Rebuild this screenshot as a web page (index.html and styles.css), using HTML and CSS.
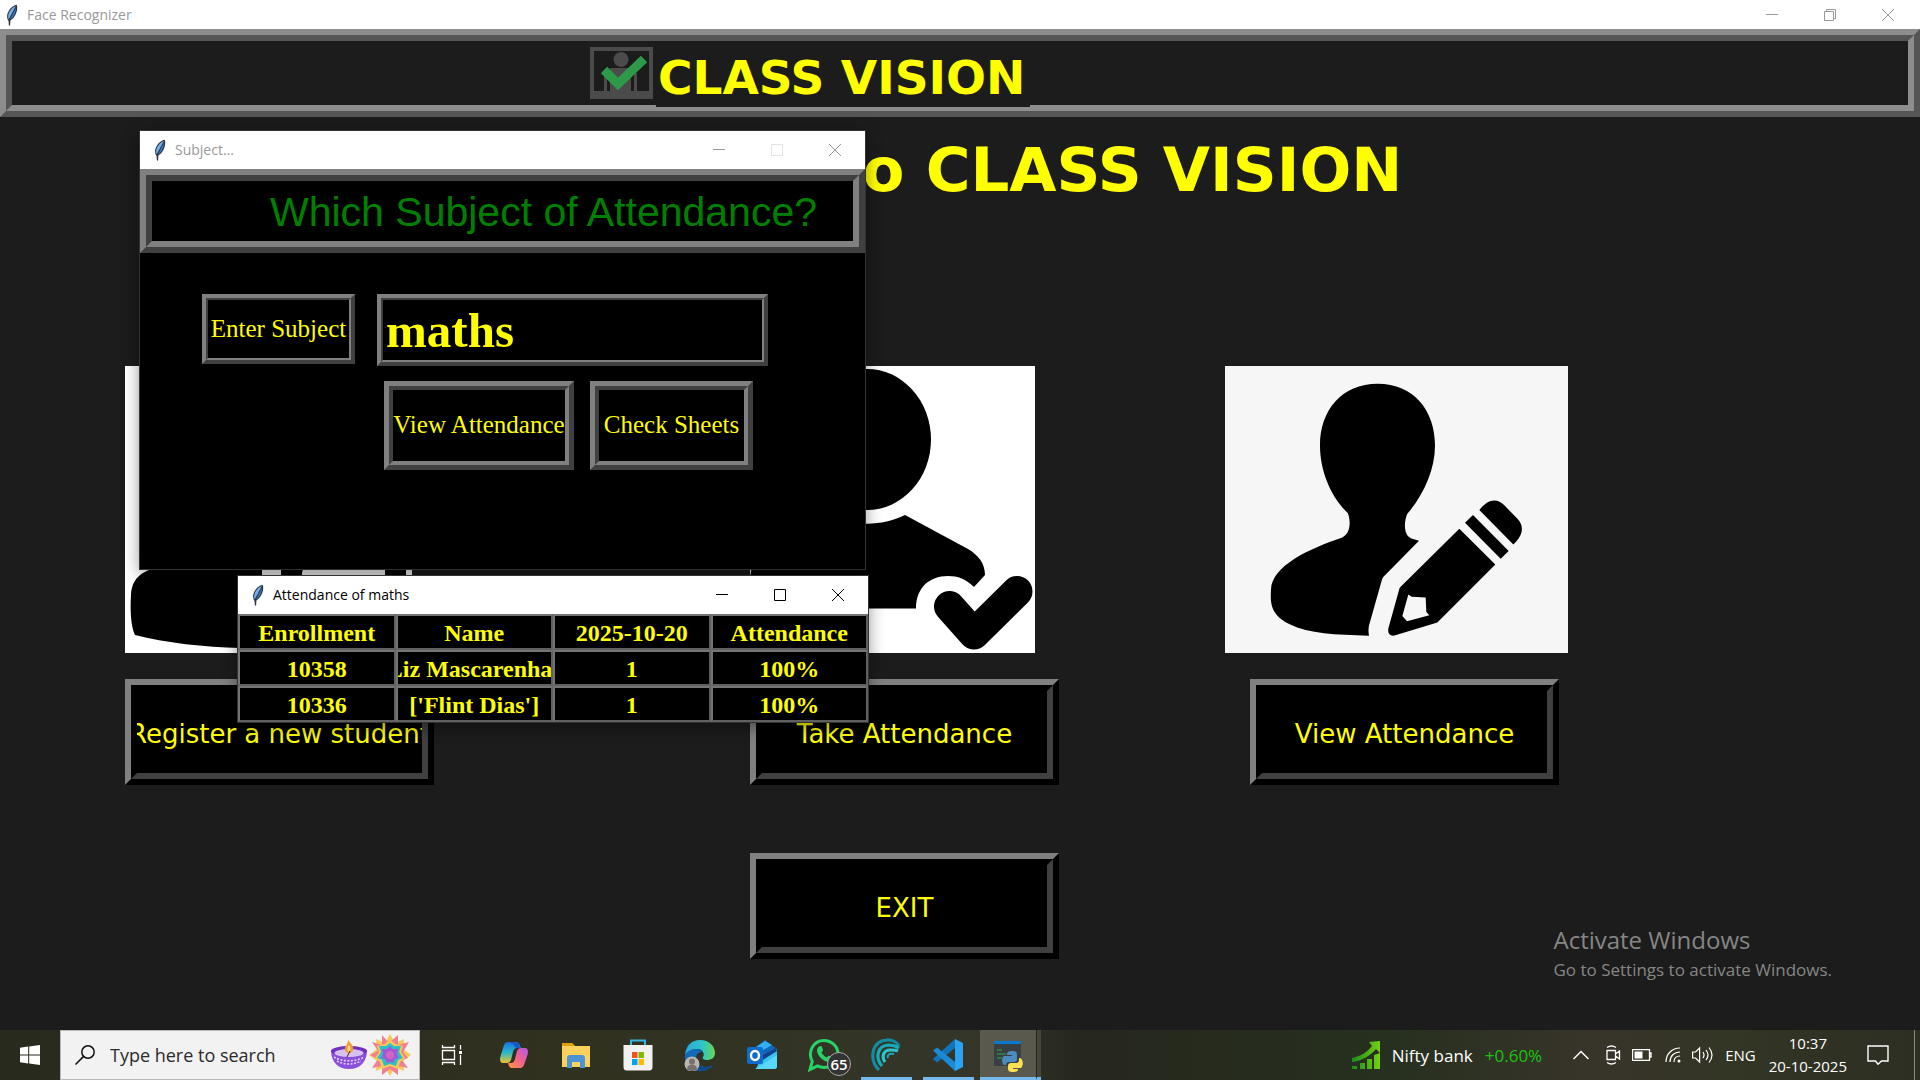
FILE: index.html
```html
<!DOCTYPE html>
<html lang="en">
<head>
<meta charset="utf-8">
<title>Face Recognizer</title>
<link rel="stylesheet" href="styles.css">
</head>
<body>
<svg class="defs" aria-hidden="true">
  <symbol id="feather" viewBox="0 0 14 22">
    <path d="M11.500 .8C7 2 3 6.500 2.200 11c-.3 2.500.2 4.500 1.300 5.800l.4 4.700h1.200l.3-5C9 14.500 12 9 12.200 4.500c.1-1.800-.1-3-.7-3.700z" fill="#2a3647"/>
    <path d="M10.800 2C7 3.500 4 7 3.200 11.500c-.2 1.600 0 2.800.5 3.800L9 5.500z" fill="#78aeea"/>
    <path d="M11.200 3.500 5 15.500c3-1.800 5.500-6 6.200-12z" fill="#3b7cc8"/>
  </symbol>
  <symbol id="minimize" viewBox="0 0 12 12"><path d="M0 5.500h12" stroke="currentColor"/></symbol>
  <symbol id="maximize" viewBox="0 0 12 12"><path d="M.5.5h11v11H.5z" fill="none" stroke="currentColor"/></symbol>
  <symbol id="restore" viewBox="0 0 12 12"><path d="M.5 2.500h9v9h-9zM2.500 2.500v-2h9v9h-2" fill="none" stroke="currentColor"/></symbol>
  <symbol id="close" viewBox="0 0 12 12"><path d="M0 0l12 12M12 0 0 12" stroke="currentColor"/></symbol>
</svg>

<main class="app">
  <header class="titlebar inactive">
    <svg class="feather"><use href="#feather"/></svg>
    <span class="caption">Face Recognizer</span>
    <button class="control" aria-label="Minimize"><svg><use href="#minimize"/></svg></button>
    <button class="control" aria-label="Restore"><svg><use href="#restore"/></svg></button>
    <button class="control" aria-label="Close"><svg><use href="#close"/></svg></button>
  </header>

  <div class="banner ridge">
    <span class="banner-logo">
      <svg viewBox="0 0 63 52" aria-hidden="true">
        <path d="M0 0h63v52H0zM4 4v40h10V26h3v18h3V21h21v23h3V26h3v18h12V4z" fill="#4b4b4b" fill-rule="evenodd"/>
        <ellipse cx="31" cy="12.500" rx="7.500" ry="7.500" fill="#4b4b4b"/>
        <path d="M14 23l14 14L54 12" fill="none" stroke="#2c9a48" stroke-width="9"/>
      </svg>
    </span>
    <span class="banner-title">CLASS VISION</span>
  </div>

  <h1 class="welcome">Welcome to CLASS VISION</h1>

  <div class="actions">
    <section class="action">
      <svg class="art art-register" viewBox="125 366 287 287" preserveAspectRatio="none" aria-hidden="true">
        <path d="M125 366h287v287H125z" fill="#fff"/>
        <ellipse cx="222" cy="452" rx="60" ry="72"/>
        <path d="M158 567c-18 5-26 12-27 28-1 16 0 32 4 40 30 8 70 12 105 13h166V540H158z"/>
        <path d="M262 540h19v50h-19zM310 540h67l8 30v15h-83v-12z" fill="#fff"/>
      </svg>
      <button class="big-button"><span>Register a new student</span></button>
    </section>
    <section class="action">
      <svg class="art art-take" viewBox="750 366 285 287" preserveAspectRatio="none" aria-hidden="true">
        <path d="M750 366h285v287H750z" fill="#fff"/>
        <ellipse cx="867" cy="439.500" rx="64" ry="70.500"/>
        <path d="M829 515c23 11 52 12 76 0l63 34c10 6 17 14 17 26l-11 12c-8-8-16-11-26-11-19 0-32 12-32 32.600H750V580c1-16 6-25 16-31z"/>
        <path d="M949.500 606.500 974 634l43-42.500" fill="none" stroke="#000" stroke-width="31" stroke-linecap="round" stroke-linejoin="round"/>
      </svg>
      <button class="big-button"><span>Take Attendance</span></button>
    </section>
    <section class="action action-view">
      <svg class="art art-view" viewBox="75 48 1029 859" preserveAspectRatio="none" aria-hidden="true">
        <path d="M75 48h1029v859H75z" fill="#f6f6f6"/>
        <path d="M533 101c108 0 172 80 172 185 0 72-34 148-83 204-12 28-10 66 12 74l23 7-102 103c-5 4-8 9-10 17l-38 134c-2 10-2 20 0 30-100-2-180-6-238-34-60-28-58-68-56-104 2-70 112-122 214-156 22-10 27-42 17-72-48-46-84-122-84-203 0-105 65-185 173-185z"/>
        <path d="M778 535 886 642 712 816 586 854c-14 4-24-4-21-20l34-122zM819 494 926 602 902 625 795 517zM838 479c26-32 52-37 75-14l38 39c22 22 20 50-11 78z"/>
        <path d="M625 732 607 796 621 812 688 794 679 784 677 741 635 739z" fill="#f6f6f6"/>
      </svg>
      <button class="big-button"><span>View Attendance</span></button>
    </section>
    <button class="big-button exit-button"><span>EXIT</span></button>
  </div>

  <p class="watermark"><strong>Activate Windows</strong><span>Go to Settings to activate Windows.</span></p>
</main>

<section class="window subject-window">
  <header class="titlebar inactive">
    <svg class="feather"><use href="#feather"/></svg>
    <span class="caption">Subject...</span>
    <button class="control" aria-label="Minimize"><svg><use href="#minimize"/></svg></button>
    <button class="control" aria-label="Maximize" disabled><svg><use href="#maximize"/></svg></button>
    <button class="control" aria-label="Close"><svg><use href="#close"/></svg></button>
  </header>
  <h2 class="question ridge">Which Subject of Attendance?</h2>
  <form class="subject-form">
    <div class="subject-row">
      <label class="subject-label ridge thin" for="subject">Enter Subject</label>
      <span class="subject-field ridge thin"><input id="subject" type="text" value="maths"></span>
    </div>
    <div class="subject-buttons">
      <button type="button" class="ridge medium view-button">View Attendance</button>
      <button type="button" class="ridge medium sheets-button">Check Sheets</button>
    </div>
  </form>
</section>

<section class="window attendance-window">
  <header class="titlebar">
    <svg class="feather"><use href="#feather"/></svg>
    <span class="caption">Attendance of maths</span>
    <button class="control" aria-label="Minimize"><svg><use href="#minimize"/></svg></button>
    <button class="control" aria-label="Maximize"><svg><use href="#maximize"/></svg></button>
    <button class="control" aria-label="Close"><svg><use href="#close"/></svg></button>
  </header>
  <table class="records">
    <thead>
      <tr><th><span>Enrollment</span></th><th><span>Name</span></th><th><span>2025-10-20</span></th><th><span>Attendance</span></th></tr>
    </thead>
    <tbody>
      <tr><td><span>10358</span></td><td><span>['Liz Mascarenhas']</span></td><td><span>1</span></td><td><span>100%</span></td></tr>
      <tr><td><span>10336</span></td><td><span>['Flint Dias']</span></td><td><span>1</span></td><td><span>100%</span></td></tr>
    </tbody>
  </table>
</section>

<footer class="taskbar">
  <button class="start" aria-label="Start">
    <svg width="20" height="20" viewBox="0 0 20 20" fill="#fff"><path d="M0 2.800 8.200 1.600V9.500H0zM9.200 1.500 20 0v9.500H9.200zM0 10.500h8.200v7.900L0 17.200zM9.200 10.500H20V20L9.200 18.500z"/></svg>
  </button>
  <label class="search">
    <svg width="20" height="20" viewBox="0 0 20 20" fill="none" stroke="#111" stroke-width="1.500"><circle cx="13" cy="7" r="6.200"/><path d="M8.600 11.400.5 19.500"/></svg>
    <input type="text" placeholder="Type here to search">
    <svg width="36" height="30" viewBox="0 0 36 30" aria-hidden="true">
      <path d="M0 10c0 12 7 19 18 19s18-7 18-19z" fill="#8a4fdc"/>
      <ellipse cx="18" cy="11" rx="18" ry="5" fill="#7230c4"/>
      <ellipse cx="18" cy="13" rx="14.500" ry="4" fill="#d8c0ee"/>
      <path d="M3 17c8 5 22 5 30 0M6 21c7 4 17 4 24 0" fill="none" stroke="#e3cdf8" stroke-width="1.600" stroke-dasharray="2 1.500"/>
      <path d="M17 0c3 4 6 6 5 10-1 4-7 4-8 0-1-3 3-5 3-10z" fill="#f39a2e"/>
      <path d="M18 5c2 3 2 6 0 7-2-1-2-4 0-7z" fill="#ffdc8a"/>
      <path d="M19 11l-3 6" stroke="#4a2430"/>
    </svg>
    <svg width="42" height="42" viewBox="-21 -21 42 42" aria-hidden="true">
      <path d="M0-21 5-12 14-16 13-6 21 0 13 6 14 16 5 12 0 21-5 12-14 16-13 6-21 0-13-6-14-16-5-12z" fill="#f5c95a"/>
      <path d="M-8-20-1-12 8-20 8-10 19-13 13-3 18 3 12 5 18 13 8 11 8 20 0 14-8 20-8 11-18 13-12 4-20 0-12-4-18-13-8-10z" fill="#f07f92"/>
      <path d="M0-16 5-11 13-9 11-3 15 3 10 7 8 14 0 11-8 14-10 7-15 3-11-3-13-9-5-11z" fill="#f5c95a"/>
      <path d="M0-12 4-9 11-9 9-3 13 3 8 5 6 11 0 9-6 11-8 5-13 3-9-3-11-9-4-9z" fill="#29c3c6"/>
      <path d="M0-9 3-6 8-6 7-1 9 3 5 4 3 8 0 7-3 8-5 4-9 3-7-1-8-6-3-6z" fill="#a259d6"/>
      <circle r="4" fill="#cf66c4"/>
    </svg>
  </label>
  <button class="task" aria-label="Task View">
    <svg width="22" height="20" viewBox="0 0 22 20" fill="none" stroke="#fff" stroke-width="1.300"><path d="M1.500 5.500h12v9h-12zM1.500 0v2.500h12V0M1.500 20v-2.500h12V20M19.500 0v4.500M19.500 10v10"/><path d="M18 6h3v3h-3z" fill="#fff" stroke="none"/></svg>
  </button>
  <button class="task" aria-label="Copilot">
    <svg width="28" height="28" viewBox="0 0 28 28">
      <defs>
        <linearGradient id="cop1" x1="0" y1="0" x2="0" y2="1"><stop offset="0" stop-color="#1b6fe0"/><stop offset=".5" stop-color="#28b8c8"/><stop offset="1" stop-color="#f0c42c"/></linearGradient>
        <linearGradient id="cop2" x1="1" y1="0" x2="0" y2="1"><stop offset="0" stop-color="#b455ea"/><stop offset=".5" stop-color="#f0628c"/><stop offset="1" stop-color="#ff9a3c"/></linearGradient>
      </defs>
      <path d="M8 1h8c2 0 3 1 4 4l1 2h-4c-2 0-3 1-4 4l-2 8c-1 2-2 3-4 3H3c-3 0-3.500-3-2.500-7L4 4c.8-2 2-3 4-3z" fill="url(#cop1)"/>
      <path d="M20 27h-8c-2 0-3-1-4-5h3c2 0 3-1 4-4l2-8c1-2 2-3 4-3h4c3 0 3.500 3 2.500 7L24 24c-.8 2-2 3-4 3z" fill="url(#cop2)"/>
      <path d="M8 1h8c2 0 3 1 4 6h-4l-3-4z" fill="#1858c8"/>
    </svg>
  </button>
  <button class="task" aria-label="File Explorer">
    <svg width="28" height="28" viewBox="0 0 28 28"><path d="M0 2h10l3 3h14v6H0z" fill="#e2a10c"/><path d="M0 5h28v21H0z" fill="#fcd25e"/><path d="M0 5V2h10l3 3z" fill="#e2a10c"/><path d="M5 27V17c0-2 1-3 3-3h12c2 0 3 1 3 3v10h-5v-6h-8v6z" fill="#4a93d6"/></svg>
  </button>
  <button class="task" aria-label="Microsoft Store">
    <svg width="30" height="32" viewBox="0 0 30 32"><path d="M8 7V1.500h14V7" fill="none" stroke="#35b3ea" stroke-width="2"/><path d="M.5 6h29v22c0 2-1 3.500-3 3.500h-23c-2 0-3-1.500-3-3.500z" fill="#f1f1f1"/><path d="M9 13h5.500v6H9z" fill="#f05022"/><path d="M15.500 13H21v6h-5.500z" fill="#7fba00"/><path d="M9 20h5.500v6H9z" fill="#01a4ef"/><path d="M15.500 20H21v6h-5.500z" fill="#ffb901"/></svg>
  </button>
  <button class="task" aria-label="Microsoft Edge">
    <svg width="32" height="32" viewBox="0 0 32 32">
      <defs><linearGradient id="edge1"><stop offset="0" stop-color="#26a8e0"/><stop offset=".6" stop-color="#30c6c4"/><stop offset="1" stop-color="#66d84c"/></linearGradient></defs>
      <path d="M1 16C2 6 8 1 16 1c9 0 15 6 15 13 0 5-4 7-8 7-3 0-5-1-4-3 2-3 0-8-6-8-5 0-9 3-12 6z" fill="url(#edge1)"/>
      <path d="M1 16c2-4 7-6 11-6 3 0 5 1 6 3-4 0-6 3-6 7 0 5 5 8 10 8 3 0 5-1 7-2-3 4-8 6-13 6C7 32 0 25 1 16z" fill="#1468b8"/>
      <path d="M13 16c-3 6 2 12 9 12 3 0 5-1 7-2-3 4-8 6-12 6-7-2-9-10-4-16z" fill="#114a8c"/>
      <circle cx="8" cy="25" r="7.500" fill="#b9b5b2"/><circle cx="8" cy="22.500" r="3" fill="#77706c"/><path d="M3 30c0-6 10-6 10 0-3 3-7 3-10 0z" fill="#77706c"/>
    </svg>
  </button>
  <button class="task" aria-label="Outlook">
    <svg width="30" height="30" viewBox="0 0 30 30"><path d="M6 9 18 0l12 9v15H6z" fill="#1066b8"/><path d="M9 7 18 1l7 4-14 8z" fill="#33aef0"/><path d="M14 17 30 9v17c0 2-1 3-3 3H9z" fill="#35c3f2"/><path d="M12 17 29 8l1 3-16 10z" fill="#123f8c"/><path d="M8 29 30 15v11c0 2-1 3-3 3z" fill="#5ad8fa"/><rect y="7" width="16" height="17" rx="2" fill="#0f6cc8"/><ellipse cx="8" cy="15.500" rx="4" ry="4.500" fill="none" stroke="#fff" stroke-width="2.400"/></svg>
  </button>
  <button class="task whatsapp" aria-label="WhatsApp">
    <svg width="32" height="34" viewBox="0 0 32 34"><path d="M2 31.500 4.300 23.500C-1 13 6 2.500 16 2.500c7.500 0 14 6 14 13.500s-6 13.500-14 13.500c-2.500 0-4.500-.6-6.500-1.600z" fill="none" stroke="#25d366" stroke-width="3"/><path d="M10.500 9c1-1.500 3-1.500 3.500 0l1 3c.3 1-1.500 2-1.500 2.600 1 2 3 4 5 4.800.8 0 1.700-2 2.500-1.600l3 1.500c1 .7.3 3-1 4-5 3-14-5-14-11 0-1.200.8-2.500 1.500-3.300z" fill="#25d366"/></svg>
    <span class="badge">65</span>
  </button>
  <button class="task open" aria-label="Wave">
    <svg width="30" height="34" viewBox="0 0 30 34" fill="none" stroke-width="3.200"><path d="M8 32C-2 22 0 3 16 2c5-.3 10 2 12 6" stroke="#128ca0"/><path d="M11 28C4 20 6 8 17 7c5 0 8 1 11 3" stroke="#17a9b8"/><path d="M14 24c-4-6-1-12 5-12 3 0 6 0 8 1" stroke="#2cc4d0"/><path d="M17 20c-1-3 1-5 6-4" stroke="#1aa5b4" stroke-width="2"/></svg>
  </button>
  <button class="task open" aria-label="Visual Studio Code">
    <svg width="30" height="32" viewBox="0 0 30 32"><path d="M22 0 30 4v24l-8 4z" fill="#2ba3f0"/><path d="M22 0v9L4 23.500 0 20z" fill="#1173b8"/><path d="M0 11.500 4 8.500 22 23v9z" fill="#1b8ad6"/></svg>
  </button>
  <button class="task open active" aria-label="Python">
    <svg width="30" height="34" viewBox="0 0 30 34"><path d="M1 3h27v25H1z" fill="#3a3f44"/><path d="M1 3h27v3H1z" fill="#0a78cc"/><path d="M4 12h5M4 16h9M4 20h5" stroke="#2c8a48" stroke-width="1.500"/><path d="M19 13c4 0 5 1 5 4v4c0 2-1 3-3 3h-5c-2 0-3 1-3 3h-2c-2-1-3-7 0-9h8v-1h-5c0-3 1-4 5-4z" fill="#4b8bbe"/><path d="M20 34c-4 0-5-1-5-4v-2c0-2 1-3 3-3h5c2 0 3-1 3-3v-2h1c3 1 4 7 1 10h-8v1h5c0 2-1 3-5 3z" fill="#ffe052"/></svg>
  </button>
  <span class="stack-edge"></span>

  <div class="tray">
    <button class="stocks">
      <svg width="28" height="28" viewBox="0 0 28 28"><defs><linearGradient id="stock"><stop offset="0" stop-color="#1e8a1e"/><stop offset="1" stop-color="#74d010"/></linearGradient></defs><path d="M0 25h5v3H0zM8 22h5v6H8zM15 18h5v10h-5zM22 14l6-2v16h-6zM0 17C10 15 16 10 20 5l-3-4L28 0v12l-4-4C19 14 10 20 0 21z" fill="url(#stock)"/></svg>
      <span>Nifty bank</span><span class="gain">+0.60%</span>
    </button>
    <svg class="chevron" width="16" height="10" viewBox="0 0 16 10" fill="none" stroke="#fff" stroke-width="1.500"><path d="M.5 9 8 1.500 15.500 9"/></svg>
    <svg class="meet" width="16" height="20" viewBox="0 0 16 20" fill="none" stroke="#fff" stroke-width="1.300"><path d="M2 5.500h8.500v9H2zM10.500 9l4-3v8l-4-3M2 2.500q4.500-3 9 0M2 17.500q4.500 3 9 0"/></svg>
    <svg class="battery" width="20" height="12" viewBox="0 0 20 12"><path d="M.5.5h17v11H.5zM17.500 4H19v4h-1.500" fill="none" stroke="#fff" stroke-width="1.300"/><path d="M2.500 2.500h8v7h-8z" fill="#fff"/></svg>
    <svg class="wifi" width="16" height="16" viewBox="0 0 16 16" fill="none" stroke="#fff" stroke-width="1.200"><path d="M1 15C1 7 7 1 15 1M5 15C5 9 9 5 15 5M9 15c0-4 2-6 6-6"/><circle cx="14" cy="14" r="1.500" fill="#fff" stroke="none"/></svg>
    <svg class="volume" width="21" height="18" viewBox="0 0 21 18" fill="none" stroke="#fff" stroke-width="1.200"><path d="M.6 6h3l4-4v14l-4-4h-3zM11 6q2 3 0 6M14 4q4 5 0 10M17 1.500q6 7.500 0 15"/></svg>
    <span class="lang">ENG</span>
    <time class="clock"><span>10:37</span><span>20-10-2025</span></time>
    <svg class="notify" width="22" height="20" viewBox="0 0 22 20" fill="none" stroke="#fff" stroke-width="1.400"><path d="M1 1h20v15h-6.500L11 19.200 8.500 16H1z"/></svg>
  </div>
</footer>
</body>
</html>
```
FILE: styles.css
```css
* { box-sizing: border-box; }

body {
  margin: 0;
  min-height: 100vh;
  display: flex;
  flex-direction: column;
  background: #1c1c1c;
  color: #ff0;
  font-family: "Open Sans", "Noto Sans", sans-serif;
  overflow-x: hidden;
}

button, input { font: inherit; color: inherit; }
svg { flex: none; }
.defs { position: absolute; width: 0; height: 0; }

/* Bevelled frames */
.ridge {
  --light: #808080;
  --dark: #404040;
  position: relative;
  border: 6px solid;
  border-color: var(--light) var(--dark) var(--dark) var(--light);
  background: #000;
}
.ridge::after {
  content: "";
  position: absolute;
  inset: 0;
  border: 6px solid;
  border-color: var(--dark) var(--light) var(--light) var(--dark);
  pointer-events: none;
}
.ridge.thin { border-width: 4px; }
.ridge.thin::after { border-width: 2px; }
.ridge.medium { border-width: 5px; }
.ridge.medium::after { border-width: 4px; }

/* Title bars */
.titlebar {
  display: flex;
  align-items: center;
  height: 38px;
  padding: 0 1px 0 13px;
  background: #fff;
  color: #000;
}
.titlebar.inactive { color: #999; }
.feather { width: 14px; height: 22px; }
.caption { flex: 1; margin-left: 8px; font-size: 14px; line-height: 20px; white-space: nowrap; }
.control {
  display: flex;
  align-items: center;
  justify-content: center;
  width: 58px;
  height: 28px;
  padding: 0;
  border: 0;
  background: none;
}
.control svg { width: 12px; height: 12px; }
.control:disabled { color: #e2e2e2; }

/* Main window */
.app { flex: 1; position: relative; display: flex; flex-direction: column; }
.app > .titlebar { height: 29px; padding: 0 3px 0 5px; }

.banner {
  --light: #8d8d8d;
  --dark: #555;
  display: flex;
  height: 88px;
  padding: 6px 6px 0 581px;
  background: #1c1c1c;
}
.banner-logo, .banner-title { position: relative; z-index: 1; background: #1c1c1c; }
.banner-logo { width: 69px; height: 64px; padding: 6px 3px; }
.banner-logo svg { display: block; width: 63px; height: 52px; }
.banner-title {
  height: 66px;
  padding: 0 5px 0 2px;
  font: bold 47px/73px "DejaVu Sans", Verdana, sans-serif;
  white-space: nowrap;
}

.welcome {
  margin: 18px 0 161px;
  padding-right: 16px;
  font: bold 61px/70px "DejaVu Sans", Verdana, sans-serif;
  text-align: center;
  white-space: nowrap;
}

.actions {
  display: grid;
  grid-template-columns: 625fr 475fr 695fr;
  row-gap: 68px;
  padding: 0 0 70px 125px;
}
.action { display: flex; flex-direction: column; align-items: flex-start; gap: 26px; }
.art { height: 287px; }
.art-register { width: 287px; }
.art-take { width: 285px; }
.art-view { width: 343px; }
.action-view .big-button { margin-left: 25px; }
.exit-button { grid-column: 2; }

.big-button {
  position: relative;
  display: flex;
  width: 309px;
  height: 106px;
  padding: 4px 6px 0;
  border: 6px solid;
  border-color: #808080 #000 #000 #808080;
  background: #000;
  font: 26px/32px "DejaVu Sans", Verdana, sans-serif;
}
.big-button::after {
  content: "";
  position: absolute;
  inset: 0;
  border: 6px solid;
  border-color: transparent #404040 #404040 transparent;
}
.big-button span {
  flex: 1;
  align-self: center;
  display: flex;
  justify-content: center;
  overflow: hidden;
  white-space: nowrap;
}

.watermark {
  position: absolute;
  right: 88px;
  bottom: 47px;
  margin: 0;
  display: flex;
  flex-direction: column;
  color: #868686;
  font-size: 17px;
  line-height: 26px;
}
.watermark strong { font-weight: 400; font-size: 24px; line-height: 34px; }

/* Floating windows */
.window { position: absolute; background: #000; box-shadow: 0 0 0 1px #333, 0 4px 16px rgba(0, 0, 0, .45); }
.subject-window { left: 140px; top: 131px; width: 725px; }
.attendance-window { left: 238px; top: 576px; width: 630px; }

.question {
  margin: 0;
  height: 84px;
  padding-left: 124px;
  color: #008000;
  font: 41px/74px "Liberation Sans", Arial, sans-serif;
  white-space: nowrap;
}

.subject-form {
  display: flex;
  flex-direction: column;
  gap: 15px;
  padding: 41px 62px 99px;
  font: 25px/28px "Liberation Serif", "Times New Roman", serif;
}
.subject-row { display: flex; gap: 22px; align-items: flex-start; }
.subject-label {
  display: flex;
  align-items: center;
  justify-content: center;
  width: 153px;
  height: 70px;
  white-space: nowrap;
}
.subject-field { width: 391px; height: 72px; display: flex; }
.subject-field input {
  width: 100%;
  padding: 1px 5px 0;
  border: 0;
  outline: 0;
  background: none;
  font-size: 49px;
  font-weight: bold;
}
.subject-buttons { display: flex; gap: 16px; padding-left: 182px; }
.subject-buttons button { height: 89px; padding: 0 0 2px; white-space: nowrap; }
.view-button { width: 190px; }
.sheets-button { width: 163px; }

.records {
  width: 100%;
  table-layout: fixed;
  border-collapse: separate;
  border-spacing: 0;
  font: bold 24px/28px "Liberation Serif", "Times New Roman", serif;
}
.records th, .records td {
  height: 36px;
  padding: 2px 0 0;
  border: 2px solid;
  border-color: #747474 #606060 #606060 #747474;
  background: #000;
}
.records span { display: flex; justify-content: center; overflow: hidden; white-space: nowrap; }

/* Taskbar */
.taskbar {
  display: flex;
  height: 50px;
  background: linear-gradient(90deg, #292a1e, #30311f 30%, #34362a 52%, #26271d 56%, #26301f 72%, #38342a 83%, #333525 90%, #2c2f22);
  color: #fff;
}
.taskbar button { padding: 0; border: 0; background: none; }
.start { width: 60px; }
.start svg { display: block; margin: auto; }
.search {
  display: flex;
  align-items: center;
  width: 360px;
  padding: 0 8px 0 14px;
  border: 1px solid #b9b9b9;
  background: #f2f2f2;
}
.search input {
  flex: 1;
  min-width: 0;
  margin-left: 15px;
  padding: 0;
  border: 0;
  outline: 0;
  background: none;
  font-size: 18px;
  color: #222;
}
.search input::placeholder { color: #2b2b2b; opacity: 1; }
.search svg + svg { margin-left: 2px; }
.task {
  position: relative;
  display: flex;
  align-items: center;
  justify-content: center;
  width: 62px;
}
.search + .task { width: 63px; }
.task.open::after {
  content: "";
  position: absolute;
  left: 6px;
  right: 5px;
  bottom: 0;
  height: 3px;
  background: #76b9ed;
}
.taskbar .task.active { width: 56px; margin-left: 1px; background: #59594e; }
.task.active::after { left: 0; right: 0; }
.stack-edge { width: 5px; background: #45463b; border-left: 1px solid #26271d; border-bottom: 3px solid #76b9ed; }
.badge {
  position: absolute;
  left: 34px;
  top: 22px;
  width: 24px;
  height: 24px;
  border: 1px solid #aaa;
  border-radius: 50%;
  background: #333;
  font-size: 15px;
  font-weight: 600;
  line-height: 22px;
}
.tray {
  flex: 1;
  display: flex;
  align-items: center;
  justify-content: flex-end;
  margin-right: 5px;
  padding-right: 25px;
  border-right: 1px solid #8a8a80;
  white-space: nowrap;
}
.stocks { display: flex; align-items: center; margin-right: 31px; font-size: 17px; }
.stocks span { margin-left: 12px; }
.stocks .gain { color: #16c60c; }
.meet { margin-left: 16px; }
.battery { margin-left: 11px; }
.wifi { margin-left: 13px; }
.volume { margin-left: 11px; }
.lang { margin-left: 12px; font-size: 15px; }
.clock {
  display: flex;
  flex-direction: column;
  align-items: center;
  margin: 0 20px 0 13px;
  font-size: 15px;
  line-height: 23px;
}
```
